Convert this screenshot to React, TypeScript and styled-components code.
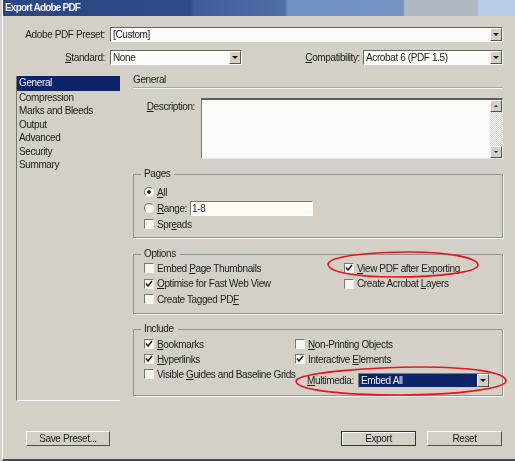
import React from "react";
import styled, { createGlobalStyle } from "styled-components";

const Global = createGlobalStyle`
  html, body { margin: 0; padding: 0; background: #d4d0c8; }
  body { font-family: "Liberation Sans", Arial, sans-serif; font-size: 10px; letter-spacing: -0.38px; color: #1c1c1c; }
  * { box-sizing: border-box; }
`;

const Frame = styled.div`
  position: relative;
  width: 515px;
  height: 461px;
  padding-left: 2px;
  overflow: hidden;
  background: #d4d0c8;
  filter: blur(0.4px);
`;

const Win = styled.div`
  height: 461px;
  border-left: 1px solid #fff;
  border-bottom: 2px solid #4a4c50;
`;

const TitleBar = styled.div`
  height: 16px;
  padding-left: 2px;
  font-size: 10px;
  letter-spacing: -0.8px;
  line-height: 16px;
  font-weight: bold;
  color: #f2f4f8;
  background: linear-gradient(
    90deg,
    #2b4682 0,
    #2f4b88 188px,
    #3f5c9a 190px,
    #4f6fa8 282px,
    #6f90c2 284px,
    #7394c5 400px,
    #b0b8c2 402px,
    #b0b8c2 474px,
    #b8cce8 476px
  );
`;

const Content = styled.div`
  padding: 11px 12px 0 13px;
`;

const Row = styled.div<{ $mt?: number }>`
  display: flex;
  align-items: center;
  height: 15px;
  margin-top: ${(p) => p.$mt ?? 0}px;
`;

const FieldLabel = styled.label<{ $w?: number; $push?: boolean }>`
  width: ${(p) => (p.$w ? `${p.$w}px` : "auto")};
  margin-left: ${(p) => (p.$push ? "auto" : 0)};
  margin-right: ${(p) => (p.$w ? 5 : 3)}px;
  text-align: right;
  white-space: nowrap;
`;

const SelectBox = styled.div<{ $w?: number; $active?: boolean }>`
  display: flex;
  align-items: center;
  justify-content: space-between;
  flex: ${(p) => (p.$w ? `0 0 ${p.$w}px` : "1")};
  height: 15px;
  padding-left: 2px;
  background: #fbfbf8;
  border: 1px solid;
  border-color: #66645f #fff #fff #66645f;
  white-space: nowrap;
  ${(p) => p.$active && "background: #0d2469; color: #f0f2fa; border-color: #7b7a75 #d4d0c8 #d4d0c8 #7b7a75;"}
`;

const Arrow = styled.span`
  flex: 0 0 12px;
  height: 13px;
  display: flex;
  align-items: center;
  justify-content: center;
  background: #d4d0c8;
  border: 1px solid;
  border-color: #fff #55534f #55534f #fff;
  &::after {
    content: "";
    border-left: 3px solid transparent;
    border-right: 3px solid transparent;
    border-top: 3px solid #111;
  }
`;

const Main = styled.div`
  display: grid;
  grid-template-columns: 104px 1fr;
  column-gap: 13px;
  height: 325px;
  margin-top: 11px;
`;

const NavList = styled.ul`
  list-style: none;
  margin: 0;
  padding: 0;
  border-left: 1px solid #77766f;
  border-bottom: 1px solid #fff;
`;

const NavItem = styled.li<{ $on?: boolean }>`
  height: ${(p) => (p.$on ? 14.5 : 13.5)}px;
  padding-left: 2px;
  line-height: 14px;
  white-space: nowrap;
  ${(p) => p.$on && "background: #0d2469; color: #f0f2fa;"}
`;

const Pane = styled.div`
  display: flex;
  flex-direction: column;
`;

const PaneHead = styled.div`
  height: 12px;
  margin-top: -3px;
  line-height: 13px;
`;

const HeadRule = styled.div`
  height: 2px;
  margin-top: 2px;
  background: #a6aaae;
  border-bottom: 1px solid #f4f4f2;
`;

const DescRow = styled.div`
  display: flex;
  margin-top: 9px;
  height: 61px;
`;

const DescLabel = styled.label`
  width: 62px;
  margin-right: 6px;
  padding-top: 3px;
  text-align: right;
`;

const TextArea = styled.div`
  flex: 1;
  display: flex;
  justify-content: flex-end;
  background: #fbfbf8;
  border: 1px solid;
  border-top: 2px solid #5e5d59;
  border-color: #5e5d59 #e8e8e4 #e8e8e4 #77766f;
`;

const ScrollBar = styled.div`
  display: flex;
  flex-direction: column;
  width: 12px;
  background: repeating-conic-gradient(#d4d0c8 0 25%, #fbfbf8 0 50%) 0 0 / 2px 2px;
`;

const ScrollThumb = styled.div<{ $up?: boolean }>`
  display: flex;
  align-items: center;
  justify-content: center;
  height: 12px;
  margin-top: ${(p) => (p.$up ? 0 : "auto")};
  background: #d4d0c8;
  border: 1px solid;
  border-color: #fff #55534f #55534f #fff;
  &::after {
    content: "";
    border-left: 2px solid transparent;
    border-right: 2px solid transparent;
    ${(p) => (p.$up ? "border-bottom: 2px solid #222;" : "border-top: 2px solid #222;")}
  }
`;

const Group = styled.fieldset<{ $h: number; $mt: number }>`
  position: relative;
  height: ${(p) => p.$h}px;
  margin: ${(p) => p.$mt}px 0 0;
  padding: 0 0 0 10px;
  border: 1px solid #8f9194;
  box-shadow: 1px 1px 0 #f6f6f4;
  min-width: 0;
`;

const Legend = styled.legend`
  margin-left: -3px;
  padding: 0 4px 0 3px;
  height: 12px;
  line-height: 12px;
`;

const Stack = styled.div<{ $gap: number; $mt?: number }>`
  display: flex;
  flex-direction: column;
  row-gap: ${(p) => p.$gap}px;
  margin-top: ${(p) => p.$mt ?? 0}px;
`;

const Cols = styled.div<{ $first: number; $mt: number }>`
  display: grid;
  grid-template-columns: ${(p) => p.$first}px 1fr;
  margin-top: ${(p) => p.$mt}px;
`;

const Opt = styled.div`
  display: flex;
  align-items: center;
  height: 12px;
  white-space: nowrap;
`;

const CheckBox = styled.span`
  display: flex;
  align-items: center;
  justify-content: center;
  flex: 0 0 10px;
  height: 10px;
  margin-right: 3px;
  background: #f4f4f0;
  border: 1px solid;
  border-color: #77766f #f4f4f0 #f4f4f0 #77766f;
`;

const RadioDot = styled.span<{ $on?: boolean }>`
  flex: 0 0 10px;
  height: 10px;
  margin-right: 3px;
  border-radius: 50%;
  background: ${(p) => (p.$on ? "radial-gradient(circle, #222 0 1.5px, #f4f4f0 2px)" : "#f4f4f0")};
  border: 1px solid;
  border-color: #77766f #f4f4f0 #f4f4f0 #77766f;
`;

const RangeLabel = styled.span`
  width: 33px;
`;

const RangeInput = styled.div`
  width: 123px;
  height: 15px;
  padding-left: 1px;
  line-height: 14px;
  background: #fbfbf8;
  border: 1px solid;
  border-color: #77766f #fff #fff #77766f;
`;

const MediaRow = styled.div`
  display: flex;
  align-items: center;
  height: 15px;
  margin: 4.5px 0 0 12px;
`;

const Footer = styled.div`
  display: flex;
  margin-top: 30px;
  padding-left: 10px;
`;

const Btn = styled.button<{ $w: number; $push?: boolean; $main?: boolean }>`
  width: ${(p) => p.$w}px;
  height: 15px;
  margin-left: ${(p) => (p.$push ? "auto" : 0)};
  margin-right: ${(p) => (p.$main ? 11 : 1)}px;
  padding: 0;
  font: inherit;
  letter-spacing: inherit;
  line-height: 12px;
  color: inherit;
  background: #d4d0c8;
  border: 1px solid;
  border-color: #fff #4f4e4a #4f4e4a #fff;
  ${(p) => p.$main && "outline: 1px solid #333; outline-offset: -1px; border-color: #222; box-shadow: inset 1px 1px 0 #fff;"}
`;

const Marks = styled.svg`
  position: absolute;
  top: 0;
  left: 0;
  pointer-events: none;
`;

function Check({ on }: { on?: boolean }) {
  return (
    <CheckBox>
      {on && (
        <svg width="8" height="8" viewBox="0 0 8 8">
          <path d="M1 3.6 L3 6 L7 1" fill="none" stroke="#222" strokeWidth="1.5" />
        </svg>
      )}
    </CheckBox>
  );
}

function Option({ on, children }: { on?: boolean; children: React.ReactNode }) {
  return (
    <Opt>
      <Check on={on} />
      <span>{children}</span>
    </Opt>
  );
}

const navItems = ["Compression", "Marks and Bleeds", "Output", "Advanced", "Security", "Summary"];

export default function App() {
  return (
    <Frame>
      <Global />
      <Win>
        <TitleBar>Export Adobe PDF</TitleBar>
        <Content>
          <Row>
            <FieldLabel $w={89}>Adobe PDF Preset:</FieldLabel>
            <SelectBox>
              [Custom]
              <Arrow />
            </SelectBox>
          </Row>
          <Row $mt={8}>
            <FieldLabel $w={89}>
              <u>S</u>tandard:
            </FieldLabel>
            <SelectBox $w={132}>
              None
              <Arrow />
            </SelectBox>
            <FieldLabel $push>
              <u>C</u>ompatibility:
            </FieldLabel>
            <SelectBox $w={140}>
              Acrobat 6 (PDF 1.5)
              <Arrow />
            </SelectBox>
          </Row>
          <Main>
            <NavList>
              <NavItem $on>General</NavItem>
              {navItems.map((n) => (
                <NavItem key={n}>{n}</NavItem>
              ))}
            </NavList>
            <Pane>
              <PaneHead>General</PaneHead>
              <HeadRule />
              <DescRow>
                <DescLabel>
                  <u>D</u>escription:
                </DescLabel>
                <TextArea>
                  <ScrollBar>
                    <ScrollThumb $up />
                    <ScrollThumb />
                  </ScrollBar>
                </TextArea>
              </DescRow>
              <Group $h={70} $mt={9}>
                <Legend>Pages</Legend>
                <Stack $gap={4} $mt={6}>
                  <Opt>
                    <RadioDot $on />
                    <span>
                      <u>A</u>ll
                    </span>
                  </Opt>
                  <Opt>
                    <RadioDot />
                    <RangeLabel>
                      <u>R</u>ange:
                    </RangeLabel>
                    <RangeInput>1-8</RangeInput>
                  </Opt>
                  <Option>
                    Spr<u>e</u>ads
                  </Option>
                </Stack>
              </Group>
              <Group $h={66} $mt={10}>
                <Legend>Options</Legend>
                <Cols $first={200} $mt={2}>
                  <Stack $gap={3.5}>
                    <Option>
                      Embed <u>P</u>age Thumbnails
                    </Option>
                    <Option on>
                      <u>O</u>ptimise for Fast Web View
                    </Option>
                    <Option>
                      Create Tagged PD<u>F</u>
                    </Option>
                  </Stack>
                  <Stack $gap={3.5}>
                    <Option on>
                      <u>V</u>iew PDF after Exporting
                    </Option>
                    <Option>
                      Create Acrobat <u>L</u>ayers
                    </Option>
                  </Stack>
                </Cols>
              </Group>
              <Group $h={73} $mt={9}>
                <Legend>Include</Legend>
                <Cols $first={151} $mt={3}>
                  <Stack $gap={3}>
                    <Option on>
                      <u>B</u>ookmarks
                    </Option>
                    <Option on>
                      <u>H</u>yperlinks
                    </Option>
                    <Option>
                      Visible <u>G</u>uides and Baseline Grids
                    </Option>
                  </Stack>
                  <Stack $gap={3}>
                    <Option>
                      <u>N</u>on-Printing Objects
                    </Option>
                    <Option on>
                      Interactive <u>E</u>lements
                    </Option>
                    <MediaRow>
                      <FieldLabel $w={46}>
                        <u>M</u>ultimedia:
                      </FieldLabel>
                      <SelectBox $w={132} $active>
                        Embed All
                        <Arrow />
                      </SelectBox>
                    </MediaRow>
                  </Stack>
                </Cols>
              </Group>
            </Pane>
          </Main>
          <Footer>
            <Btn $w={84}>Save Preset...</Btn>
            <Btn $w={75} $push $main>
              Export
            </Btn>
            <Btn $w={75}>Reset</Btn>
          </Footer>
        </Content>
      </Win>
      <Marks width="515" height="461" viewBox="0 0 515 461">
        <path
          d="M328 264 C330 256 370 252 410 252 C450 252 478 258 478 265 C478 272 440 277 395 277 C355 277 328 272 328 264 Z"
          fill="none"
          stroke="#e8141c"
          strokeWidth="1.6"
        />
        <path
          d="M296 381 C298 372 380 367 420 367 C470 367 506 372 506 381 C506 388 460 395 400 395 C340 395 296 390 296 381 Z"
          fill="none"
          stroke="#e8141c"
          strokeWidth="1.6"
        />
      </Marks>
    </Frame>
  );
}
